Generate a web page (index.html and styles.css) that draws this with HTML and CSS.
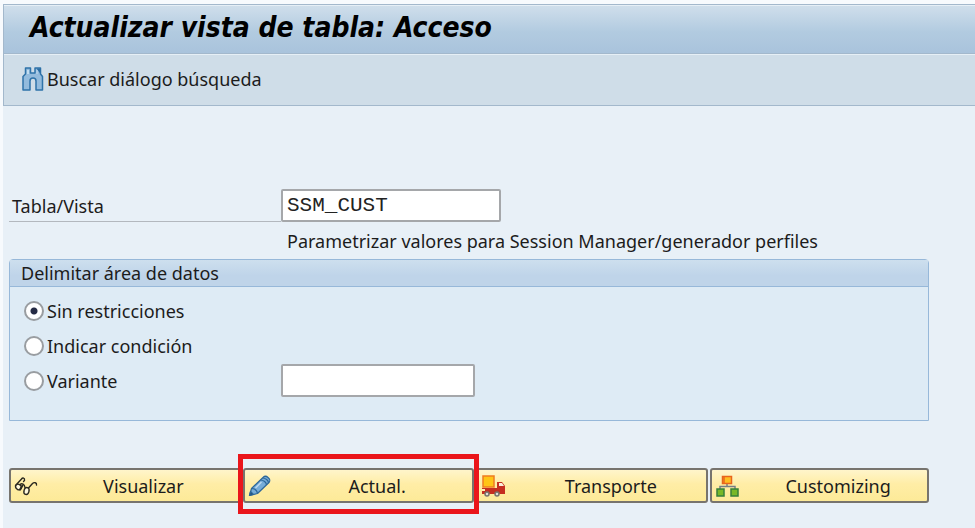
FILE: index.html
```html
<!DOCTYPE html>
<html lang="es">
<head>
    <meta charset="UTF-8">
    <meta name="viewport" content="width=device-width, initial-scale=1.0">
    <title>Actualizar vista de tabla: Acceso</title>
    <link rel="stylesheet" href="styles.css">
</head>
<body>
    <div class="window">
        <header class="header">
            <h1 class="title">Actualizar vista de tabla: Acceso</h1>
            <div class="toolbar">
                <button class="tool-btn" type="button">
                    <svg width="22" height="24" viewBox="0 0 22 24" fill="#93bbdd" stroke="#2f73a9" stroke-width="1.5" stroke-linejoin="round">
                        <path d="M3.500 1h5v5h4.500V1h5.500v6l2 2.500V23h-6.500V14c0-2-1-3-3-3s-3 1-3 3v9H1V9.500L3.500 7z"/>
                        <path d="M14.500 1.500h4V7z" fill="#2b6da3" stroke="none"/>
                        <path d="M5 3h2v4H5zM14.500 3h1v4h-1z" fill="#c2dcf0" stroke="none"/>
                    </svg>
                    Buscar diálogo búsqueda
                </button>
            </div>
        </header>

        <form class="form">
            <div class="table-row">
                <label class="table-label" for="tabla">Tabla/Vista</label>
                <input class="text-input table-input" type="text" id="tabla" value="SSM_CUST">
            </div>
            <p class="description">Parametrizar valores para Session Manager/generador perfiles</p>

            <section class="group">
                <h2 class="group-title">Delimitar área de datos</h2>
                <div class="group-body">
                    <div class="option">
                        <input class="radio" type="radio" name="limite" id="sin" checked>
                        <label for="sin">Sin restricciones</label>
                    </div>
                    <div class="option">
                        <input class="radio" type="radio" name="limite" id="condicion">
                        <label for="condicion">Indicar condición</label>
                    </div>
                    <div class="option">
                        <input class="radio" type="radio" name="limite" id="variante">
                        <label class="variant-label" for="variante">Variante</label>
                        <input class="text-input variant-input" type="text" aria-label="Variante">
                    </div>
                </div>
            </section>

            <div class="actions">
                <button class="action-btn" type="button">
                    <svg width="26" height="22" viewBox="0 0 26 22" fill="none" stroke="#2b2920" stroke-width="1.4" stroke-linecap="round">
                        <path d="M1.500 10.500L7.500 4c1-1.500 3.500-1.500 3 1.500l-1 1M14.500 13l4-4.500c1.500-1.500 4.500-1 4 1.500"/>
                        <ellipse cx="4.500" cy="12" rx="3" ry="2.500" transform="rotate(40 4.500 12)" fill="#fff8dc"/>
                        <ellipse cx="12.500" cy="16" rx="2.500" ry="3.500" transform="rotate(15 12.500 16)" fill="#fff8dc"/>
                        <path d="M6 9.500c2-1.500 4.500-.5 5 3"/>
                        <path d="M6 14.500l2.500-4" stroke-width="2"/>
                    </svg>
                    <span class="action-text">Visualizar</span>
                </button>
                <div class="highlight">
                    <button class="action-btn" type="button">
                        <svg width="26" height="22" viewBox="0 0 26 22" fill="#76acd8" stroke="#2d6799" stroke-width="1.2" stroke-linejoin="round">
                            <path d="M1.500 20.500l2-7L15 2.500c1.500-1.500 3.500-1.500 5 0l1 1c1 1 1 3 0 4L9.500 18.500z"/>
                            <path d="M3.500 13.500c3 0 5.500 2 6 5M12.500 5c3 0 6 2.500 6 5M14.500 3c3 0 6 2.500 6 5" fill="none"/>
                            <path d="M7.500 13l6-6" stroke="#bdd9ef" stroke-width="1.5"/>
                            <path d="M1.500 20.500l1-4 3 3z" fill="#234e78"/>
                        </svg>
                        <span class="action-text">Actual.</span>
                    </button>
                </div>
                <button class="action-btn" type="button">
                    <svg width="26" height="22" viewBox="0 0 26 22">
                        <path d="M1 13h15V7h5l3 4v8H1z" fill="#c52e20"/>
                        <path d="M18 8h3l2 3h-5z" fill="#fbeedb"/>
                        <path d="M2 1h11v11H2z" fill="#ffc515" stroke="#ef7c20" stroke-width="1.5"/>
                        <path d="M1 14h3v2H1z" fill="#fff0b0"/>
                        <g fill="#deded8" stroke="#77736b" stroke-width="1.5">
                            <circle cx="6" cy="19" r="2"/>
                            <circle cx="16" cy="19" r="2"/>
                        </g>
                    </svg>
                    <span class="action-text">Transporte</span>
                </button>
                <button class="action-btn" type="button">
                    <svg width="26" height="22" viewBox="0 0 26 22">
                        <path d="M12 8v3M5 15v-3.500h15V15" fill="none" stroke="#777d85" stroke-width="1.5"/>
                        <path d="M7.500 1.500h9v7h-9z" fill="#ffbd20" stroke="#e8641c" stroke-width="1.5"/>
                        <path d="M9 2v6" stroke="#e8641c" stroke-width="1.5"/>
                        <path d="M2 14h7v7H2zM16 14h7v7h-7z" fill="#78b828" stroke="#36803a" stroke-width="1.5"/>
                    </svg>
                    <span class="action-text">Customizing</span>
                </button>
            </div>
        </form>
    </div>
</body>
</html>
```

FILE: styles.css
```css
:root {
    --page-bg: #e8f0f7;
    --header-bg: #cfdde8;
    --header-border: #a3b8cc;
    --group-bg: #deebf5;
    --group-border: #97b8d9;
    --input-border: #a5a7aa;
    --button-border: #77746e;
    --mark-color: #ea151b;
}

* {
    margin: 0;
    padding: 0;
    box-sizing: border-box;
}

body {
    font-family: 'Noto Sans', Tahoma, sans-serif;
    font-size: 18px;
    line-height: 24px;
    color: #1c1c1c;
    background: #f7fafd;
    min-height: 100vh;
    padding: 4px 0 0 3px;
    display: flex;
}

.window {
    flex: 1;
    background: var(--page-bg);
}

.header {
    border: 1px solid var(--header-border);
    border-right: none;
    background: var(--header-bg);
}

.title {
    height: 49px;
    padding: 0 26px;
    font-family: 'DejaVu Sans Condensed', 'DejaVu Sans', Verdana, sans-serif;
    font-size: 28px;
    font-style: italic;
    line-height: 44px;
    color: #000;
    background: linear-gradient(#cfdeeb, #b2cbe0 55%, #a9c3dc);
    border-top: 1px solid #e6eff6;
    border-bottom: 1px solid var(--header-border);
}

.toolbar {
    padding: 12px 18px 14px;
    border-top: 1px solid #e6eff6;
}

.tool-btn {
    display: flex;
    align-items: center;
    gap: 3px;
    font: inherit;
    color: inherit;
    background: none;
    border: none;
}

.form {
    padding: 83px 46px 0 6px;
}

.table-row {
    display: flex;
}

.table-label {
    width: 272px;
    padding: 5px 3px 0;
    border-bottom: 1px solid #b3b8be;
}

.text-input {
    height: 33px;
    padding: 0 4px;
    font-family: 'Liberation Mono', 'Courier New', monospace;
    font-size: 21px;
    color: #222;
    background: #fff;
    border: 2px solid var(--input-border);
    border-radius: 2px;
}

.table-input {
    width: 220px;
}

.description {
    padding: 7px 0 6px 278px;
}

.group {
    border: 1px solid var(--group-border);
    border-radius: 4px 4px 0 0;
    background: var(--group-bg);
}

.group-title {
    padding: 0 11px;
    font-size: 18px;
    font-weight: 400;
    line-height: 26px;
    background: linear-gradient(#cddfee, #bfd4e9 60%);
    border-bottom: 1px solid var(--group-border);
}

.group-body {
    padding: 6px 14px 22px;
}

.option {
    display: flex;
    align-items: center;
    gap: 3px;
    height: 35px;
}

.radio {
    appearance: none;
    width: 20px;
    height: 20px;
    border: 2px solid #999da1;
    border-radius: 50%;
    background: #fff;
}

.radio:checked {
    background: radial-gradient(circle, #252b45 3px, #fff 4px);
}

.variant-label {
    width: 231px;
}

.variant-input {
    width: 194px;
}

.actions {
    display: grid;
    grid-template-columns: 232fr 232fr 232fr 219fr;
    gap: 2px;
    margin-top: 47px;
}

.action-btn {
    display: flex;
    align-items: center;
    width: 100%;
    height: 35px;
    padding: 0 3px;
    font: inherit;
    color: inherit;
    background: linear-gradient(#fff5cb, #ffeda6 45%, #fdea98);
    border: 2px solid var(--button-border);
    border-radius: 3px;
}

.action-text {
    flex: 1;
    padding-left: 11px;
    text-align: center;
}

.highlight {
    position: relative;
}

.highlight::after {
    content: '';
    position: absolute;
    inset: -14px -5px -11px;
    border: 5px solid var(--mark-color);
    pointer-events: none;
}
```
